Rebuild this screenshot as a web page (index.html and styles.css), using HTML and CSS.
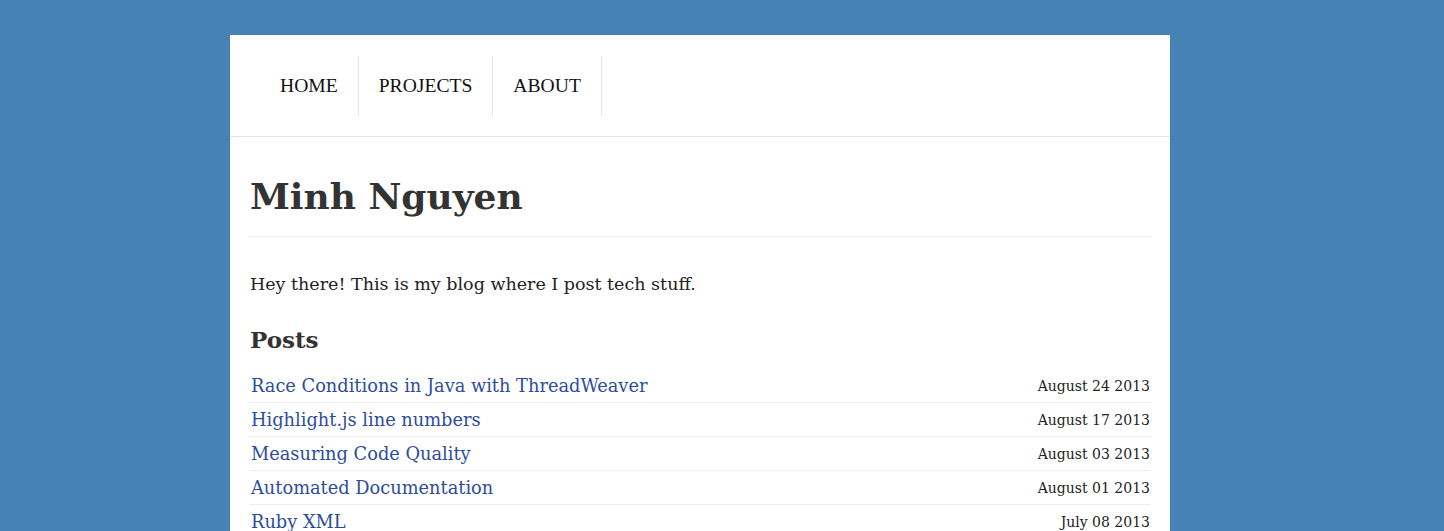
FILE: index.html
```html
<!DOCTYPE html>
<html>
<head>
<meta charset="utf-8">
<link rel="stylesheet" href="styles.css">
</head>
<body>
<div class="page">
  <nav class="nav">
    <ul class="nav-list">
      <li class="nav-item">HOME</li>
      <li class="nav-item">PROJECTS</li>
      <li class="nav-item">ABOUT</li>
    </ul>
  </nav>
  <main class="content">
    <h1 class="title">Minh Nguyen</h1>
    <p class="intro">Hey there! This is my blog where I post tech stuff.</p>
    <h2 class="section">Posts</h2>
    <ul class="posts">
      <li class="post"><a class="post-link">Race Conditions in Java with ThreadWeaver</a><span class="post-date">August 24 2013</span></li>
      <li class="post"><a class="post-link">Highlight.js line numbers</a><span class="post-date">August 17 2013</span></li>
      <li class="post"><a class="post-link">Measuring Code Quality</a><span class="post-date">August 03 2013</span></li>
      <li class="post"><a class="post-link">Automated Documentation</a><span class="post-date">August 01 2013</span></li>
      <li class="post"><a class="post-link">Ruby XML</a><span class="post-date">July 08 2013</span></li>
    </ul>
  </main>
</div>
</body>
</html>
```
FILE: styles.css
```css
html, body {
  margin: 0;
  padding: 0;
}
body {
  background: #4682b4;
  font-family: "DejaVu Serif", Georgia, serif;
  color: #333;
}
.page {
  width: 940px;
  margin: 35px 0 0 230px;
  background: #fff;
  min-height: 600px;
}
.nav {
  border-bottom: 1px solid #e5e5e5;
  padding: 21px 0 0 30px;
  height: 80px;
}
.nav-list {
  list-style: none;
  margin: 0;
  padding: 0;
  display: flex;
}
.nav-item {
  font-family: "Liberation Serif", "Times New Roman", serif;
  font-size: 19.6px;
  color: #111;
  padding: 0 20px;
  height: 60px;
  line-height: 60px;
  border-right: 1px solid #e5e5e5;
}
.content {
  padding: 0 20px;
}
.title {
  margin: 0;
  padding: 35px 0 16px;
  font-size: 36px;
  font-weight: bold;
  color: #333;
  line-height: 48px;
  border-bottom: 1px solid #eee;
}
.intro {
  margin: 30px 0 0;
  font-size: 17.5px;
  line-height: 34px;
  color: #222;
}
.section {
  margin: 24px 0 14px;
  font-size: 23px;
  line-height: 30px;
  color: #333;
}
.posts {
  list-style: none;
  margin: 0;
  padding: 0;
}
.post {
  display: flex;
  justify-content: space-between;
  align-items: center;
  height: 33px;
  border-bottom: 1px solid #eee;
}
.post-link {
  color: #2d4d9c;
  font-size: 17.8px;
  padding-left: 1px;
}
.post-date {
  font-size: 14px;
  color: #222;
}
```
